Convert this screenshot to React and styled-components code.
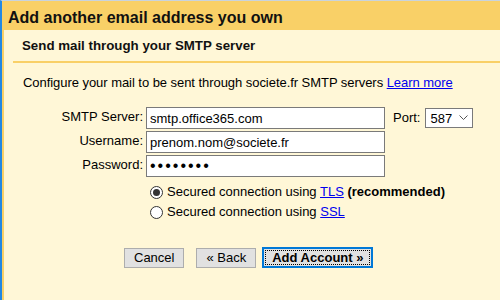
import React from "react";
import styled, { createGlobalStyle } from "styled-components";

const GlobalStyle = createGlobalStyle`
  html, body {
    margin: 0;
    padding: 0;
    background: #fff7d7;
  }
  body {
    font-family: "Liberation Sans", Arial, sans-serif;
    font-size: 13px;
    color: #000;
  }
`;

const Window = styled.div`
  width: 500px;
  height: 300px;
  box-sizing: border-box;
  border-top: 1px solid #c9d3dd;
  border-left: 2px solid #2388e3;
  background: #f9d067;
  display: flex;
  flex-direction: column;
  overflow: hidden;
`;

const Title = styled.h1`
  margin: 0;
  height: 29px;
  padding: 0 0 0 6px;
  font-size: 16px;
  font-weight: bold;
  line-height: 34px;
  color: #111;
`;

const Body = styled.div`
  flex: 1;
  margin-left: 2px;
  background: #fff7d7;
  padding: 0 0 0 9px;
`;

const Subtitle = styled.h2`
  margin: 0;
  padding: 8px 0 0 9px;
  height: 23px;
  font-size: 13.3px;
  font-weight: bold;
  line-height: 16px;
  border-bottom: 2px solid #f9d067;
  color: #111;
`;

const Intro = styled.p`
  margin: 0;
  padding: 12px 0 0 10px;
  line-height: 16px;
  letter-spacing: -0.05px;
`;

const Link = styled.a`
  color: #0000ee;
  text-decoration: underline;
  cursor: pointer;
`;

const Form = styled.div`
  margin-top: 16px;
  display: grid;
  grid-template-columns: 130px auto;
  column-gap: 3px;
  row-gap: 2px;
`;

const Label = styled.label`
  text-align: right;
  padding-top: 2px;
  line-height: 15px;
`;

const Line = styled.div`
  display: flex;
  align-items: flex-start;
`;

const TextInput = styled.input`
  box-sizing: border-box;
  width: 239px;
  height: 22px;
  margin: 0;
  padding: 0 3px;
  border: 1px solid #7a7a7a;
  background: #fff;
  font-family: "Liberation Sans", Arial, sans-serif;
  font-size: ${(p) => (p.type === "password" ? "16px" : "13px")};
  color: #000;
  outline: none;
  letter-spacing: ${(p) => (p.type === "password" ? "2px" : "0")};
`;

const PortLabel = styled.span`
  margin: 0 5px 0 8px;
  padding-top: 3px;
  line-height: 15px;
`;

const SelectWrap = styled.div`
  position: relative;
  margin-top: 1px;
`;

const Select = styled.select`
  appearance: none;
  box-sizing: border-box;
  width: 48px;
  height: 20px;
  margin: 0;
  padding: 0 0 0 4px;
  border: 1px solid #7a7a7a;
  border-radius: 0;
  background: #fff;
  font-family: "Liberation Sans", Arial, sans-serif;
  font-size: 13px;
  color: #000;
`;

const Chevron = styled.svg`
  position: absolute;
  right: 5px;
  top: 7px;
  pointer-events: none;
`;

const Options = styled.div`
  grid-column: 2;
  margin-top: 6px;
  padding-left: 4px;
  display: flex;
  flex-direction: column;
  gap: 6px;
`;

const Choice = styled.label`
  display: flex;
  align-items: center;
  gap: 4px;
  line-height: 14px;
`;

const Radio = styled.span`
  box-sizing: border-box;
  width: 13px;
  height: 13px;
  border-radius: 50%;
  border: 1px solid #333;
  background: #fff;
  display: flex;
  align-items: center;
  justify-content: center;
  &::after {
    content: "";
    width: 7px;
    height: 7px;
    border-radius: 50%;
    background: ${(p) => (p.checked ? "#333" : "transparent")};
  }
`;

const Buttons = styled.div`
  margin-top: 28px;
  display: flex;
  align-items: center;
  padding-left: 111px;
`;

const Button = styled.button`
  box-sizing: border-box;
  height: ${(p) => (p.primary ? "21px" : "20px")};
  margin: 0 ${(p) => p.$after || 0}px 0 0;
  padding: 0 ${(p) => (p.primary ? "8px" : "9px")};
  border: ${(p) => (p.primary ? "2px solid #0078d7" : "1px solid #adadad")};
  background: #e1e1e1;
  font-family: "Liberation Sans", Arial, sans-serif;
  font-size: 13px;
  font-weight: ${(p) => (p.primary ? "bold" : "normal")};
  color: #000;
  position: relative;
  cursor: pointer;
  ${(p) =>
    p.primary &&
    `
    &::after {
      content: "";
      position: absolute;
      inset: 1px;
      border: 1px dotted #000;
    }
  `}
`;

export default function App() {
  return (
    <>
      <GlobalStyle />
      <Window>
        <Title>Add another email address you own</Title>
        <Body>
          <Subtitle>Send mail through your SMTP server</Subtitle>
          <Intro>
            Configure your mail to be sent through societe.fr SMTP servers{" "}
            <Link>Learn more</Link>
          </Intro>
          <Form>
            <Label>SMTP Server:</Label>
            <Line>
              <TextInput readOnly value="smtp.office365.com" />
              <PortLabel>Port:</PortLabel>
              <SelectWrap>
                <Select defaultValue="587">
                  <option value="587">587</option>
                  <option value="465">465</option>
                </Select>
                <Chevron width="9" height="6" viewBox="0 0 9 6">
                  <path d="M0.5 0.5 L4.5 4.5 L8.5 0.5" fill="none" stroke="#555" strokeWidth="1" />
                </Chevron>
              </SelectWrap>
            </Line>
            <Label>Username:</Label>
            <Line>
              <TextInput readOnly value="prenom.nom@societe.fr" />
            </Line>
            <Label>Password:</Label>
            <Line>
              <TextInput readOnly type="password" value="secret12" />
            </Line>
            <Options>
              <Choice>
                <Radio checked />
                <span>
                  Secured connection using <Link>TLS</Link> <b>(recommended)</b>
                </span>
              </Choice>
              <Choice>
                <Radio />
                <span>
                  Secured connection using <Link>SSL</Link>
                </span>
              </Choice>
            </Options>
          </Form>
          <Buttons>
            <Button $after={12}>Cancel</Button>
            <Button $after={6}>« Back</Button>
            <Button primary>Add Account »</Button>
          </Buttons>
        </Body>
      </Window>
    </>
  );
}
